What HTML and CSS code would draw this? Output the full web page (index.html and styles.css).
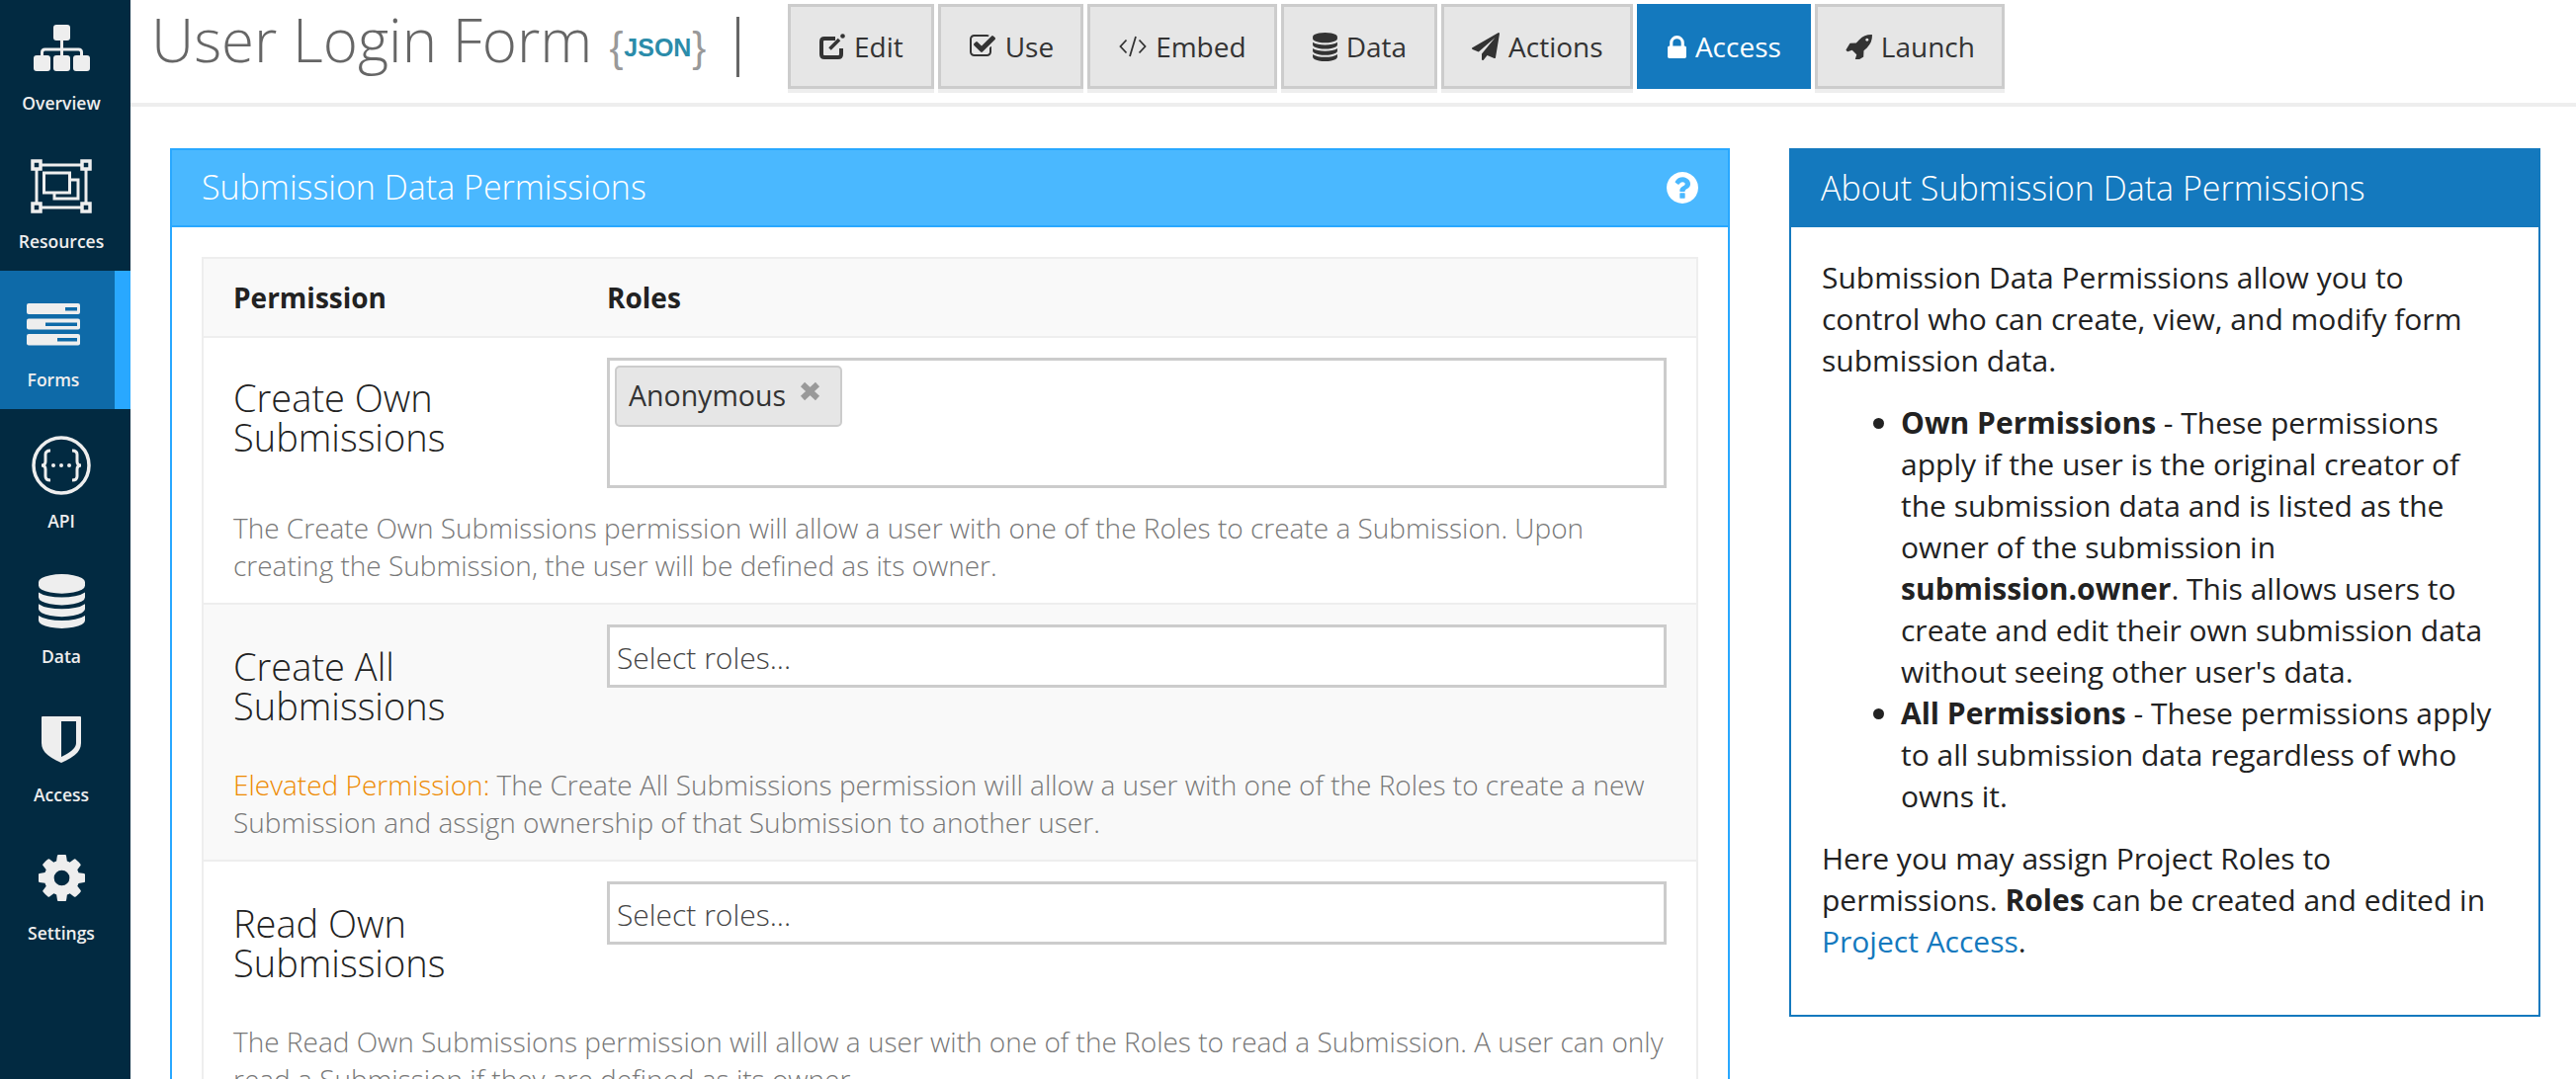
FILE: index.html
```html
<!DOCTYPE html>
<html lang="en">
<head>
<meta charset="utf-8">
<title>User Login Form</title>
<link rel="stylesheet" href="styles.css">
</head>
<body>
<div class="app">
  <aside class="sidebar">
    <nav class="nav">
      <a class="nav-item">
        <span class="nav-icon"><svg width="57" height="47" viewBox="0 0 57 47"><g fill="#eee"><rect x="20" y="0" width="17" height="16" rx="3"/><rect x="0" y="31" width="17" height="16" rx="3"/><rect x="20" y="31" width="17" height="16" rx="3"/><rect x="40" y="31" width="17" height="16" rx="3"/></g><path d="M28.500 15v17M8.500 32v-4q0-3 3-3h34q3 0 3 3v4" fill="none" stroke="#eee" stroke-width="3"/></svg></span>
        <span class="nav-label">Overview</span>
      </a>
      <a class="nav-item">
        <span class="nav-icon"><svg width="62" height="55" viewBox="0 0 62 55"><g fill="none" stroke="#eee" stroke-width="3"><rect x="6" y="6" width="50" height="43"/><rect x="13.500" y="14" width="26" height="20"/><path d="M39.500 21H48V40H24V34"/></g><g fill="#022a41" stroke="#eee" stroke-width="3.500"><rect x="2" y="2" width="8" height="8"/><rect x="52" y="2" width="8" height="8"/><rect x="2" y="45" width="8" height="8"/><rect x="52" y="45" width="8" height="8"/></g></svg></span>
        <span class="nav-label">Resources</span>
      </a>
      <a class="nav-item active">
        <span class="nav-icon"><svg width="54" height="43" viewBox="0 0 54 43"><g fill="#eee"><rect width="54" height="11" rx="2"/><rect y="15.500" width="54" height="11" rx="2"/><rect y="31" width="54" height="11.500" rx="2"/></g><g fill="#0e6aa8"><rect x="39" y="4" width="12" height="3.500"/><rect x="19" y="19.500" width="32" height="3.500"/><rect x="31" y="35" width="20" height="3.500"/></g></svg></span>
        <span class="nav-label">Forms</span>
      </a>
      <a class="nav-item nav-api">
        <span class="nav-icon"><svg width="60" height="60" viewBox="0 0 60 60"><circle cx="30" cy="30" r="28" fill="none" stroke="#eee" stroke-width="3.500"/><g fill="none" stroke="#eee" stroke-width="3"><path d="M19 15q-5 0-5 4v7q0 4-4 4q4 0 4 4v7q0 4 5 4"/><path d="M41 15q5 0 5 4v7q0 4 4 4q-4 0-4 4v7q0 4-5 4"/></g><g fill="#eee"><circle cx="22" cy="30" r="2"/><circle cx="30" cy="30" r="2"/><circle cx="38" cy="30" r="2"/></g></svg></span>
        <span class="nav-label">API</span>
      </a>
      <a class="nav-item">
        <span class="nav-icon"><svg width="47" height="55" viewBox="128 0 1536 1792"><path fill="#eee" d="M896 768q237 0 443-43t325-127v170q0 69-103 128t-280 93.500-385 34.500-385-34.500-280-93.500-103-128v-170q119 84 325 127t443 43zm0 768q237 0 443-43t325-127v170q0 69-103 128t-280 93.500-385 34.500-385-34.500-280-93.500-103-128v-170q119 84 325 127t443 43zm0-384q237 0 443-43t325-127v170q0 69-103 128t-280 93.500-385 34.500-385-34.500-280-93.500-103-128v-170q119 84 325 127t443 43zm0-1152q208 0 385 34.500t280 93.500 103 128v128q0 69-103 128t-280 93.500-385 34.500-385-34.500-280-93.500-103-128v-128q0-69 103-128t280-93.500 385-34.500z"/></svg></span>
        <span class="nav-label">Data</span>
      </a>
      <a class="nav-item">
        <span class="nav-icon"><svg width="40" height="47" viewBox="0 0 40 47"><path d="M1 0h38a1 1 0 0 1 1 1v26c0 8-6 14-20 20C6 41 0 35 0 27V1a1 1 0 0 1 1-1z" fill="#eee"/><path d="M20 5h15v22c0 5-5 9-15 14z" fill="#022a41"/></svg></span>
        <span class="nav-label">Access</span>
      </a>
      <a class="nav-item">
        <span class="nav-icon"><svg width="47" height="47" viewBox="128 128 1536 1536"><path fill="#eee" d="M1152 896q0-106-75-181t-181-75-181 75-75 181 75 181 181 75 181-75 75-181zm512-109v222q0 12-8 23t-20 13l-185 28q-19 54-39 91 35 50 107 138 10 12 10 25t-9 23q-27 37-99 108t-94 71q-12 0-26-9l-138-108q-44 23-91 38-16 136-29 186-7 28-36 28h-222q-14 0-24.500-8.500t-11.500-21.500l-28-184q-49-16-90-37l-141 107q-10 9-25 9-14 0-25-11-126-114-165-168-7-10-7-23 0-12 8-23 15-21 51-66.500t54-70.500q-27-50-41-99l-183-27q-13-2-21-12.500t-8-23.500v-222q0-12 8-23t19-13l186-28q14-46 39-92-40-57-107-138-10-12-10-24 0-10 9-23 26-36 98.500-107.500t94.500-71.500q13 0 26 10l138 107q44-23 91-38 16-136 29-186 7-28 36-28h222q14 0 24.500 8.500t11.500 21.500l28 184q49 16 90 37l142-107q9-9 24-9 13 0 25 10 129 119 165 170 7 8 7 22 0 12-8 23-15 21-51 66.500t-54 70.500q26 50 41 98l183 28q13 2 21 12.500t8 23.500z"/></svg></span>
        <span class="nav-label">Settings</span>
      </a>
    </nav>
  </aside>
  <main class="main">
    <header class="topbar">
      <h1 class="title">User Login Form</h1>
      <span class="json"><span class="brace">{</span><span class="json-text">JSON</span><span class="brace">}</span></span>
      <span class="sep"></span>
      <div class="tabs">
        <a class="tab tab-edit"><svg class="ico ico-edit" viewBox="0 0 26 26"><path fill="none" stroke="#333" stroke-width="4" d="M22 15v6q0 3-3 3H5q-3 0-3-3V8q0-3 3-3h11"/><path fill="none" stroke="#333" stroke-width="3.500" d="M10.500 15.500L20 6"/><circle cx="23.500" cy="2.500" r="2.300" fill="#333"/></svg>Edit</a>
        <a class="tab tab-use"><svg class="ico ico-check" viewBox="0 0 1792 1792"><path fill="#333" d="M1472 930v318q0 119-84.500 203.500t-203.500 84.500h-832q-119 0-203.500-84.500t-84.500-203.500v-832q0-119 84.500-203.500t203.500-84.500h832q63 0 117 25 15 7 18 23 3 17-9 29l-49 49q-10 10-23 10-3 0-9-2-23-6-45-6h-832q-66 0-113 47t-47 113v832q0 66 47 113t113 47h832q66 0 113-47t47-113v-254q0-13 9-22l64-64q10-10 23-10 6 0 12 3 20 8 20 29zm231-489l-814 814q-24 24-57 24t-57-24l-430-430q-24-24-24-57t24-57l110-110q24-24 57-24t57 24l263 263 647-647q24-24 57-24t57 24l110 110q24 24 24 57t-24 57z"/></svg>Use</a>
        <a class="tab tab-embed"><svg class="ico ico-code" viewBox="0 0 28 24"><path fill="none" stroke="#333" stroke-width="1.800" d="M7.500 5.500L1.500 12l6 6.500M20.500 5.500l6 6.500-6 6.500M17 2l-6 20"/></svg>Embed</a>
        <a class="tab tab-data"><svg class="ico ico-db" viewBox="128 0 1536 1792"><path fill="#333" d="M896 768q237 0 443-43t325-127v170q0 69-103 128t-280 93.500-385 34.500-385-34.500-280-93.500-103-128v-170q119 84 325 127t443 43zm0 768q237 0 443-43t325-127v170q0 69-103 128t-280 93.500-385 34.500-385-34.500-280-93.500-103-128v-170q119 84 325 127t443 43zm0-384q237 0 443-43t325-127v170q0 69-103 128t-280 93.500-385 34.500-385-34.500-280-93.500-103-128v-170q119 84 325 127t443 43zm0-1152q208 0 385 34.500t280 93.500 103 128v128q0 69-103 128t-280 93.500-385 34.500-385-34.500-280-93.500-103-128v-128q0-69 103-128t280-93.500 385-34.500z"/></svg>Data</a>
        <a class="tab tab-actions"><svg class="ico ico-plane" viewBox="0 0 1792 1792"><path fill="#333" d="M1764 11q33 24 27 64l-256 1536q-5 29-32 45-14 8-31 8-11 0-24-5l-453-185-242 295q-18 23-49 23-13 0-22-4-19-7-30.500-23.500t-11.500-36.500v-349l864-1059-1069 925-395-162q-37-14-40-55-2-40 32-59l1664-960q15-9 32-9 20 0 36 11z"/></svg>Actions</a>
        <a class="tab tab-access active"><svg class="ico ico-lock" viewBox="320 128 1152 1408"><path fill="#fff" d="M640 768h512v-192q0-106-75-181t-181-75-181 75-75 181v192zm832 96v576q0 40-28 68t-68 28h-960q-40 0-68-28t-28-68v-576q0-40 28-68t68-28h32v-192q0-184 132-316t316-132 316 132 132 316v192h32q40 0 68 28t28 68z"/></svg>Access</a>
        <a class="tab tab-launch"><svg class="ico ico-rocket" viewBox="64 128 1664 1536"><path fill="#333" d="M1504 448q0-40-28-68t-68-28-68 28-28 68 28 68 68 28 68-28 28-68zm224-288q0 249-75.500 430.500t-253.500 360.500q-81 80-195 176l-20 379q-2 16-16 26l-384 224q-7 4-16 4-12 0-23-9l-64-64q-13-14-8-32l85-276-281-281-276 85q-3 1-9 1-14 0-23-9l-64-64q-17-19-5-39l224-384q10-14 26-16l379-20q96-114 176-195 188-187 358-258t431-71q14 0 24 9.500t10 22.500z"/></svg>Launch</a>
      </div>
    </header>
    <div class="content">
      <section class="panel panel-main">
        <div class="panel-head">
          <h2 class="panel-title">Submission Data Permissions</h2>
          <svg class="help" viewBox="128 128 1536 1536"><path fill="#fff" d="M1024 1376v-192q0-14-9-23t-23-9h-192q-14 0-23 9t-9 23v192q0 14 9 23t23 9h192q14 0 23-9t9-23zm256-672q0-88-55.500-163t-138.500-116-170-41q-243 0-371 213-15 24 8 42l132 100q7 6 19 6 16 0 25-12 53-68 86-92 34-24 86-24 48 0 85.500 26t37.500 59q0 38-20 61t-68 45q-63 28-115.500 86.500t-52.500 125.500v36q0 14 9 23t23 9h192q14 0 23-9t9-23q0-19 21.500-49.500t54.500-49.500q32-18 49-28.500t46-35 44.500-48 28-60.500 12.500-81zm384 192q0 209-103 385.500t-279.500 279.500-385.500 103-385.500-103-279.500-279.500-103-385.500 103-385.500 279.500-279.500 385.500-103 385.500 103 279.500 279.500 103 385.500z"/></svg>
        </div>
        <div class="panel-body">
          <div class="perm-table">
            <div class="perm-head">
              <span class="col-perm">Permission</span>
              <span class="col-roles">Roles</span>
            </div>
            <div class="perm-row">
              <div class="perm-top">
                <div class="perm-name perm-name-first">Create Own Submissions</div>
                <div class="select select-tall"><span class="tag">Anonymous<svg class="tag-x" viewBox="0 0 21 20"><path d="M3 3l15 14M18 3L3 17" fill="none" stroke="#999" stroke-width="6"/></svg></span></div>
              </div>
              <p class="perm-desc">The Create Own Submissions permission will allow a user with one of the Roles to create a Submission. Upon creating the Submission, the user will be defined as its owner.</p>
            </div>
            <div class="perm-row striped">
              <div class="perm-top">
                <div class="perm-name">Create All Submissions</div>
                <div class="select">Select roles...</div>
              </div>
              <p class="perm-desc"><span class="elevated">Elevated Permission:</span> The Create All Submissions permission will allow a user with one of the Roles to create a new Submission and assign ownership of that Submission to another user.</p>
            </div>
            <div class="perm-row">
              <div class="perm-top">
                <div class="perm-name">Read Own Submissions</div>
                <div class="select">Select roles...</div>
              </div>
              <p class="perm-desc">The Read Own Submissions permission will allow a user with one of the Roles to read a Submission. A user can only read a Submission if they are defined as its owner.</p>
            </div>
          </div>
        </div>
      </section>
      <section class="panel panel-about">
        <div class="panel-head">
          <h2 class="panel-title">About Submission Data Permissions</h2>
        </div>
        <div class="about-body">
          <p>Submission Data Permissions allow you to control who can create, view, and modify form submission data.</p>
          <ul>
            <li><strong>Own Permissions</strong> - These permissions apply if the user is the original creator of the submission data and is listed as the owner of the submission in <strong>submission.owner</strong>. This allows users to create and edit their own submission data without seeing other user's data.</li>
            <li><strong>All Permissions</strong> - These permissions apply to all submission data regardless of who owns it.</li>
          </ul>
          <p>Here you may assign Project Roles to permissions. <strong>Roles</strong> can be created and edited in <a class="link">Project Access</a>.</p>
        </div>
      </section>
    </div>
  </main>
</div>
</body>
</html>
```
FILE: styles.css
```css
* { box-sizing: border-box; }
html, body { margin: 0; padding: 0; height: 100%; overflow: hidden; }
body { font-family: "Open Sans", "Liberation Sans", sans-serif; color: #222; background: #fff; }
.app { display: flex; height: 1092px; overflow: hidden; }

.sidebar { width: 132px; flex: none; background: #022a41; overflow: hidden; }
.nav { display: flex; flex-direction: column; margin-top: -6px; }
.nav-item { height: 140px; padding-right: 8px; display: flex; flex-direction: column; align-items: center; color: #eee; }
.nav-item.active { background: #0e6aa8; border-right: 16px solid #29a8ff; }
.nav-icon { height: 78px; margin-top: 15px; display: flex; align-items: center; justify-content: center; }
.nav-api .nav-icon { margin-top: 18px; }
.nav-label { font-size: 17.500px; font-weight: 600; line-height: 34px; }

.main { flex: 1; min-width: 0; }
.topbar { height: 108px; border-bottom: 4px solid #eee; display: flex; align-items: flex-start; padding-left: 21px; }
.title { margin: 4px 0 0; font-size: 60px; font-weight: 300; line-height: 72px; color: #666; white-space: nowrap; }
.json { width: 98px; margin: 24px 0 0 17px; display: flex; align-items: center; justify-content: space-between; font-family: "Liberation Sans", Arial, sans-serif; line-height: 48px; }
.brace { font-size: 42px; font-weight: 400; color: #999; }
.json-text { font-size: 25px; font-weight: 700; color: #2b8caa; }
.sep { width: 3px; height: 61px; background: #666; margin: 17px 0 0 31px; }
.tabs { display: flex; gap: 4px; margin: 4px 0 0 49px; }
.tab { height: 86px; border: 3px solid #ccc; background: #e6e6e6; display: flex; align-items: center; justify-content: center; gap: 9px; font-size: 28px; color: #333; box-shadow: 0 4px 0 #eee; }
.tab.active { background: #1479be; border-color: #1479be; color: #fff; box-shadow: none; }
.tab-edit { width: 148px; }
.tab-use { width: 147px; }
.tab-embed { width: 192px; }
.tab-data { width: 158px; }
.tab-actions { width: 194px; }
.tab-access { width: 176px; }
.tab-launch { width: 192px; }
.ico { flex: none; }
.ico-edit { width: 26px; height: 26px; }
.ico-check { width: 28px; height: 28px; }
.ico-code { width: 28px; height: 24px; }
.ico-db { width: 25px; height: 29px; }
.ico-plane { width: 28px; height: 28px; }
.ico-lock { width: 19px; height: 23px; }
.ico-rocket { width: 27px; height: 25px; }

.content { display: flex; align-items: flex-start; padding: 42px 36px 0 40px; gap: 60px; }
.panel { border-style: solid; border-width: 2px; background: #fff; }
.panel-main { width: 1578px; flex: none; border-color: #29a8ff; }
.panel-about { width: 760px; flex: none; border-color: #1479be; }
.panel-head { height: 78px; display: flex; align-items: center; justify-content: space-between; padding: 0 30px; color: #fff; }
.panel-main .panel-head { background: #4ab8ff; border-bottom: 2px solid #29a8ff; }
.panel-about .panel-head { background: #1479be; }
.panel-title { margin: 0 0 2px; font-size: 34px; font-weight: 300; line-height: 40px; color: #fff; }
.help { width: 32px; height: 32px; }
.panel-body { padding: 30px; }

.perm-table { border: 2px solid #eee; }
.perm-head { height: 80px; background: #f9f9f9; border-bottom: 2px solid #eee; display: flex; align-items: center; padding: 0 30px; font-size: 28px; font-weight: 700; }
.col-perm { width: 378px; }
.perm-row { padding: 20px 30px 0; border-bottom: 2px solid #eee; }
.perm-row.striped { background: #f9f9f9; }
.perm-top { display: flex; }
.perm-name { width: 378px; flex: none; padding: 22px 100px 20px 0; font-size: 38px; font-weight: 300; line-height: 40px; color: #222; }
.perm-name-first { padding-top: 20px; }
.select { flex: 1; height: 64px; border: 3px solid #ccc; background: #fff; padding: 0 7px; font-size: 30px; font-weight: 300; line-height: 62px; color: #444; }
.select-tall { height: 132px; line-height: normal; padding: 5px 5px 0; display: flex; align-items: flex-start; }
.tag { display: flex; height: 62px; align-items: flex-start; padding: 9px 20px 0 12px; background: #e6e6e6; border: 2px solid #ccc; border-radius: 5px; font-size: 28.500px; font-weight: 400; line-height: 38px; color: #333; }
.tag-x { width: 21px; height: 20px; margin: 5px 0 0 14px; flex: none; }
.perm-desc { margin: 21px 0 0; padding-bottom: 19px; font-size: 28px; font-weight: 300; line-height: 38px; color: #777; }
.elevated { color: #ee8a00; font-weight: 300; }

.about-body { padding: 30px 44px 32px 31px; font-size: 30px; line-height: 42px; color: #222; }
.about-body p { margin: 0 0 21px; }
.about-body ul { margin: 0 0 21px; padding-left: 80px; }
.about-body strong { font-weight: 700; }
.link { color: #1479be; }
```
